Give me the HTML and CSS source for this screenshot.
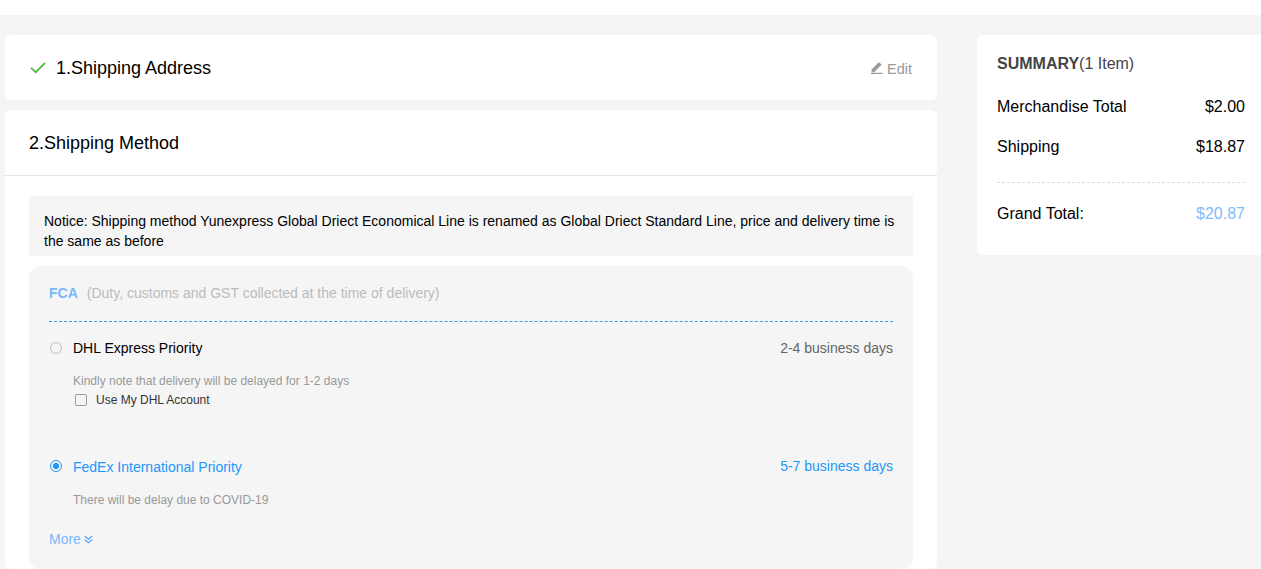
FILE: index.html
```html
<!DOCTYPE html>
<html lang="en">
<head>
<meta charset="utf-8">
<title>Checkout</title>
<link rel="stylesheet" href="styles.css">
</head>
<body>
<div class="topbar"></div>
<main class="page">
  <div class="left">
    <section class="card step-one">
      <div class="step-title">
        <svg class="check" width="16" height="12" viewBox="0 0 16 12"><path d="M1 5.8 5.8 10.2 15 0.8" fill="none" stroke="#52b83f" stroke-width="1.7"/></svg>
        <span class="step-label">1.Shipping Address</span>
      </div>
      <a class="edit">
        <svg width="12" height="12" viewBox="0 0 12 12"><path d="M0.6 7.6 7.8 0.2 10.6 2.6 3.4 10 0.6 10.4Z" fill="#999"/><rect x="0" y="10.8" width="11.5" height="1.2" fill="#999"/></svg>
        <span class="edit-label">Edit</span>
      </a>
    </section>
    <section class="card step-two">
      <h2 class="method-head">2.Shipping Method</h2>
      <div class="method-body">
        <p class="notice">Notice: Shipping method Yunexpress Global Driect Economical Line is renamed as Global Driect Standard Line, price and delivery time is the same as before</p>
        <div class="group">
          <div class="group-head"><b class="fca">FCA</b><span class="fca-note">(Duty, customs and GST collected at the time of delivery)</span></div>
          <div class="option first">
            <div class="option-row">
              <span class="radio"></span>
              <span class="option-name">DHL Express Priority</span>
              <span class="option-days">2-4 business days</span>
            </div>
            <p class="option-note note-dhl">Kindly note that delivery will be delayed for 1-2 days</p>
            <label class="account"><span class="box"></span>Use My DHL Account</label>
          </div>
          <div class="option second selected">
            <div class="option-row">
              <span class="radio on"></span>
              <span class="option-name">FedEx International Priority</span>
              <span class="option-days">5-7 business days</span>
            </div>
            <p class="option-note note-fedex">There will be delay due to COVID-19</p>
          </div>
          <a class="more">More
            <svg width="9" height="9" viewBox="0 0 9 9"><path d="M0.7 1 4.5 4.2 8.3 1M0.7 4.6 4.5 7.8 8.3 4.6" fill="none" stroke="#4aa3f5" stroke-width="1.2"/></svg>
          </a>
        </div>
      </div>
    </section>
  </div>
  <aside class="card summary">
    <h3 class="sum-title"><b>SUMMARY</b>(1 Item)</h3>
    <div class="sum-row"><span>Merchandise Total</span><span>$2.00</span></div>
    <div class="sum-row"><span>Shipping</span><span>$18.87</span></div>
    <div class="sum-row total"><span>Grand Total:</span><span class="total-val">$20.87</span></div>
  </aside>
</main>
</body>
</html>
```
FILE: styles.css
```css
* { box-sizing: border-box; }
html, body { margin: 0; height: 569px; overflow: hidden; }
body { background: #f5f5f5; font-family: "Liberation Sans", Arial, sans-serif; color: #000; }
p, h2, h3 { margin: 0; font-weight: normal; }
.topbar { height: 15px; background: #fff; }
.page { display: flex; align-items: flex-start; padding: 20px 0 0 5px; }
.left { width: 932px; flex: none; display: flex; flex-direction: column; gap: 10px; }
.card { background: #fff; border-radius: 6px; }
.step-one { height: 65px; display: flex; align-items: center; justify-content: space-between; padding: 0 25px; }
.step-title { display: flex; align-items: center; gap: 10px; font-size: 18px; }
.step-label { margin-top: 2px; }
.edit { display: flex; align-items: center; gap: 4px; color: #999; font-size: 14.5px; }
.edit-label { margin-top: 2px; }
.method-head { height: 66px; line-height: 67px; padding-left: 24px; font-size: 18px; border-bottom: 1px solid #e4e4e4; }
.method-body { padding: 20px 24px 0; }
.notice { background: #f5f5f5; height: 60px; padding: 15px 15px 0; font-size: 14px; line-height: 20px; }
.group { margin-top: 10px; background: #f5f5f5; border-radius: 12px; padding: 0 20px; height: 303px; }
.group-head { height: 56px; border-bottom: 1px dashed #3a9be8; padding-top: 19px; font-size: 14px; line-height: 16px; }
.fca { color: #76b9fb; margin-right: 9px; }
.fca-note { color: #bbb; }
.option-row { display: flex; align-items: center; height: 20px; font-size: 14px; }
.first { padding-top: 16px; }
.second { margin-top: 50px; }
.radio { width: 12px; height: 12px; border: 1.5px solid #bbb; border-radius: 50%; margin: 0 11px 0 1px; }
.radio.on { border-color: #2196f3; background: radial-gradient(circle, #2196f3 0 2.8px, transparent 3.4px); }
.second .radio, .second .option-days { margin-bottom: 2px; }
.option-days { margin-left: auto; color: #666; }
.selected .option-name, .selected .option-days { color: #1e96fa; }
.option-note { font-size: 12px; color: #999; line-height: 14px; margin-left: 24px; }
.note-dhl { margin-top: 16px; }
.note-fedex { margin-top: 16px; }
.account { display: flex; align-items: center; margin: 5px 0 0 26px; font-size: 12px; line-height: 14px; color: #333; }
.box { width: 12px; height: 12px; border: 1px solid #999; border-radius: 2px; margin-right: 9px; }
.more { display: flex; align-items: center; gap: 3px; margin-top: 24px; font-size: 14px; line-height: 16px; color: #76b9fb; }
.summary { margin-left: 40px; flex: 1; height: 220px; padding: 20px 16px 0 20px; border-radius: 6px 0 0 6px; }
.sum-title { font-size: 16px; line-height: 18px; color: #444; margin-bottom: 14px; }
.sum-row { display: flex; justify-content: space-between; font-size: 16px; line-height: 18px; padding: 11px 0; }
.sum-row.total { margin-top: 15px; padding-top: 22px; border-top: 1px dashed #ddd; }
.total-val { color: #7fbcfb; }
```
